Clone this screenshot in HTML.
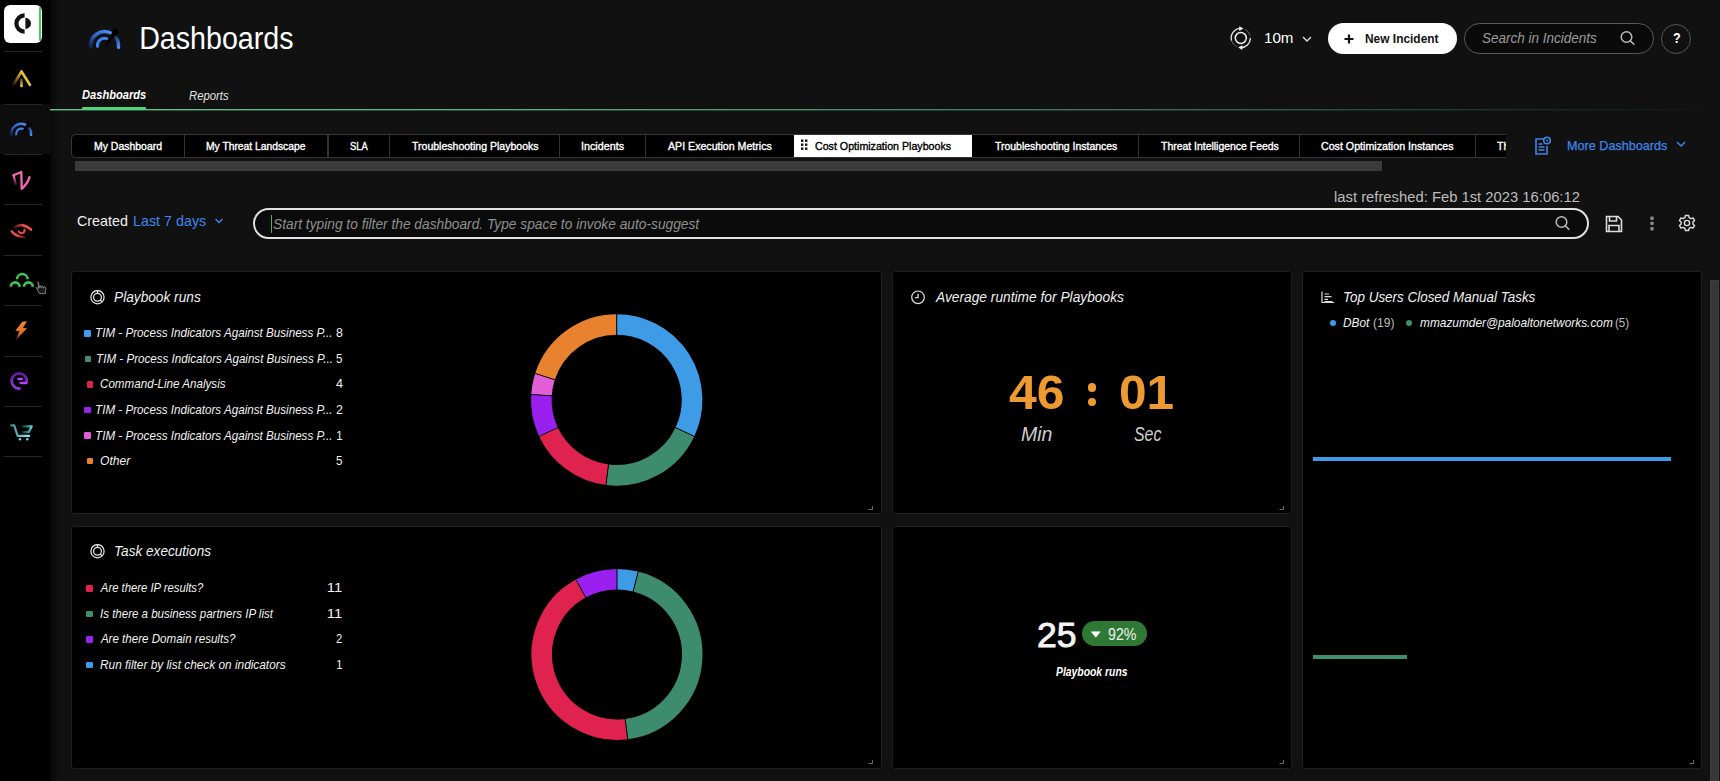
<!DOCTYPE html>
<html><head><meta charset="utf-8"><title>Dashboards</title>
<style>
html,body{margin:0;padding:0;}
body{width:1720px;height:781px;overflow:hidden;background:#111111;position:relative;font-family:"Liberation Sans", sans-serif;}
.b{position:absolute;box-sizing:border-box;}
.t{position:absolute;white-space:nowrap;line-height:1.117;transform-origin:0 0;}

#h_title{transform:translate(-1.83px,1.32px) scaleX(0.9159)}
#h_10m{transform:translate(-1.02px,0.41px) scaleX(1.0234)}
#h_new{transform:translate(0.00px,0.88px) scaleX(0.9083)}
#h_search{transform:translate(0.00px,0.41px) scaleX(0.9126)}
#h_q{transform:translate(0.00px,0.41px) scaleX(0.8556)}
#st_dash{transform:translate(0.00px,0.75px) scaleX(0.8554)}
#st_rep{transform:translate(0.00px,0.75px) scaleX(0.8723)}
#tab0{transform:translate(0.00px,0.62px) scaleX(0.9856)}
#tab1{transform:translate(0.00px,0.62px) scaleX(0.9707)}
#tab2{transform:translate(0.00px,0.62px) scaleX(0.8819)}
#tab3{transform:translate(0.00px,0.62px) scaleX(0.9915)}
#tab4{transform:translate(0.00px,0.62px) scaleX(1.0128)}
#tab5{transform:translate(0.00px,0.62px) scaleX(1.0003)}
#tab6{transform:translate(0.00px,0.62px) scaleX(0.9859)}
#tab7{transform:translate(0.00px,0.62px) scaleX(0.9840)}
#tab8{transform:translate(0.00px,0.62px) scaleX(1.0040)}
#tab_act{transform:translate(0.00px,0.62px) scaleX(1.0036)}
#tab_th{transform:translate(0.00px,0.62px) scaleX(1.0000)}
#md{transform:translate(-0.93px,0.27px) scaleX(0.9308)}
#lastref{transform:translate(-0.96px,-0.10px) scaleX(0.9631)}
#created{transform:translate(0.00px,0.41px) scaleX(0.9654)}
#last7{transform:translate(-0.97px,0.41px) scaleX(0.9667)}
#ph{transform:translate(0.00px,0.41px) scaleX(0.9291)}
#p1t{transform:translate(0.00px,0.16px) scaleX(0.9430)}
#p1r0{transform:translate(-0.89px,0.89px) scaleX(0.8865)}
#p1n0{transform:translate(0.00px,0.89px) scaleX(0.9429)}
#p1r1{transform:translate(-0.88px,0.89px) scaleX(0.8843)}
#p1n1{transform:translate(0.00px,0.89px) scaleX(0.8857)}
#p1r2{transform:translate(0.00px,0.89px) scaleX(0.8859)}
#p1n2{transform:translate(0.00px,0.89px) scaleX(0.9571)}
#p1r3{transform:translate(-0.89px,0.88px) scaleX(0.8865)}
#p1n3{transform:translate(0.00px,0.88px) scaleX(0.9429)}
#p1r4{transform:translate(-0.89px,0.88px) scaleX(0.8865)}
#p1n4{transform:translate(-0.87px,0.88px) scaleX(0.8667)}
#p1r5{transform:translate(0.00px,0.89px) scaleX(0.9207)}
#p1n5{transform:translate(0.00px,0.89px) scaleX(0.8857)}
#p2t{transform:translate(0.95px,0.16px) scaleX(0.9484)}
#min{transform:translate(0.00px,0.73px) scaleX(1.0327)}
#sec{transform:translate(-1.03px,0.73px) scaleX(1.0276)}
#minl{transform:translate(0.00px,0.71px) scaleX(0.9997)}
#secl{transform:translate(0.00px,0.71px) scaleX(0.8144)}
#p3t{transform:translate(-0.92px,0.16px) scaleX(0.9248)}
#dbot{transform:translate(0.00px,0.38px) scaleX(0.9389)}
#dbotn{transform:translate(0.00px,0.38px) scaleX(0.9613)}
#mm{transform:translate(0.00px,0.38px) scaleX(0.9450)}
#mmn{transform:translate(0.00px,0.38px) scaleX(0.9229)}
#p4t{transform:translate(-0.94px,0.15px) scaleX(0.9365)}
#p4r0{transform:translate(0.86px,0.88px) scaleX(0.8596)}
#p4n0{transform:translate(-1.14px,0.88px) scaleX(1.1359)}
#p4r1{transform:translate(0.00px,0.88px) scaleX(0.8767)}
#p4n1{transform:translate(-1.14px,0.88px) scaleX(1.1359)}
#p4r2{transform:translate(0.88px,0.88px) scaleX(0.8822)}
#p4n2{transform:translate(0.00px,0.88px) scaleX(0.8571)}
#p4r3{transform:translate(0.00px,0.88px) scaleX(0.9023)}
#p4n3{transform:translate(-0.85px,0.88px) scaleX(0.8500)}
#n25{transform:translate(-1.02px,-0.39px) scaleX(1.0189)}
#pct{transform:translate(0.00px,0.28px) scaleX(0.9006)}
#pbr{transform:translate(0.00px,0.39px) scaleX(0.8259)}
</style></head>
<body>
<div class="b" style="left:0px;top:0px;width:50px;height:781px;background:#000"></div>
<div class="b" style="left:50px;top:0px;width:9px;height:781px;background:linear-gradient(90deg,#080808,#111111)"></div>
<div class="b" style="left:0px;top:104px;width:50px;height:50px;background:#0d0d0d"></div>
<div class="b" style="left:4px;top:51px;width:38px;height:1px;background:#262626"></div>
<div class="b" style="left:4px;top:104px;width:38px;height:1px;background:#262626"></div>
<div class="b" style="left:4px;top:154px;width:38px;height:1px;background:#262626"></div>
<div class="b" style="left:4px;top:204px;width:38px;height:1px;background:#262626"></div>
<div class="b" style="left:4px;top:255px;width:38px;height:1px;background:#262626"></div>
<div class="b" style="left:4px;top:305px;width:38px;height:1px;background:#262626"></div>
<div class="b" style="left:4px;top:356px;width:38px;height:1px;background:#262626"></div>
<div class="b" style="left:4px;top:406px;width:38px;height:1px;background:#262626"></div>
<div class="b" style="left:4px;top:456px;width:38px;height:1px;background:#262626"></div>
<div class="b" style="left:4px;top:5px;width:38px;height:38px;background:#fff;border-radius:6px"></div>
<div class="b" style="left:38.6px;top:6.5px;width:2.5px;height:34.2px;background:#3ccf5a;border-radius:1px"></div>
<svg class="b" style="left:4px;top:5px;" width="38" height="38" viewBox="0 0 38 38">
<path d="M20.6 8.2 A10.3 10.3 0 0 0 20.6 28.8 L20.6 24.6 A6 6 0 0 1 20.6 12.4 Z" fill="#111"/>
<path d="M21.4 12.8 A5.6 5.6 0 0 1 21.4 24.0 Z" fill="#111"/>
</svg>
<svg class="b" style="left:0px;top:60px;" width="50" height="40" viewBox="0 0 50 40">
<defs><linearGradient id="gy" gradientUnits="userSpaceOnUse" x1="12" y1="26" x2="22" y2="11"><stop offset="0" stop-color="#000"/><stop offset="0.6" stop-color="#a88520"/><stop offset="1" stop-color="#e8c23a"/></linearGradient>
<linearGradient id="gy2" gradientUnits="userSpaceOnUse" x1="0" y1="19" x2="0" y2="27"><stop offset="0" stop-color="#5a4510"/><stop offset="1" stop-color="#ffd840"/></linearGradient></defs>
<path d="M12.7 26 L21.5 11.5" stroke="url(#gy)" stroke-width="2.6" fill="none" stroke-linecap="round"/>
<path d="M21.5 11.5 L30 25" stroke="#e6bf38" stroke-width="2.6" fill="none" stroke-linecap="round"/>
<path d="M21.5 19.5 L21.5 26" stroke="url(#gy2)" stroke-width="2.6" stroke-linecap="round"/>
</svg>
<svg class="b" style="left:0px;top:104px;" width="50" height="50" viewBox="0 0 50 50"><defs><linearGradient id="gsa" x1="0" x2="1" y1="1" y2="0"><stop offset="0" stop-color="#10244f"/><stop offset="0.45" stop-color="#2f63c2"/><stop offset="1" stop-color="#4a8ff7"/></linearGradient><linearGradient id="gsb" x1="0" x2="0" y1="0" y2="1"><stop offset="0" stop-color="#17346e"/><stop offset="1" stop-color="#4a8ff7"/></linearGradient></defs><path d="M11.35 30.74 A9.90 9.90 0 0 1 25.23 20.65" stroke="url(#gsa)" stroke-width="2.48" fill="none" stroke-linecap="round"/><path d="M27.57 22.11 A9.90 9.90 0 0 1 31.03 30.91" stroke="url(#gsb)" stroke-width="2.48" fill="none" stroke-linecap="round"/><path d="M16.13 30.32 A5.11 5.11 0 0 1 22.78 24.84" stroke="#3d7ff0" stroke-width="2.13" fill="none" stroke-linecap="round"/><path d="M21.55 30.05 L26.03 21.54 L28.51 16.71 L31.99 20.47 L27.45 24.38 L22.27 30.41 Z" fill="#000"/></svg>
<svg class="b" style="left:0px;top:160px;" width="50" height="40" viewBox="0 0 50 40">
<defs><linearGradient id="gpk" gradientUnits="userSpaceOnUse" x1="0" y1="16" x2="0" y2="25"><stop offset="0" stop-color="#f46aae"/><stop offset="1" stop-color="#3a0f25"/></linearGradient></defs>
<path d="M15.6 24 L13.6 15.2" stroke="url(#gpk)" stroke-width="2.3" fill="none" stroke-linecap="round"/>
<path d="M13.6 15.2 L21.3 12 L21.7 28.8 Q27.2 24.5 29.5 17.2" stroke="#f46aae" stroke-width="2.3" fill="none" stroke-linecap="round" stroke-linejoin="round"/>
</svg>
<svg class="b" style="left:0px;top:210px;" width="50" height="40" viewBox="0 0 50 40">
<defs><linearGradient id="ge1" gradientUnits="userSpaceOnUse" x1="14" y1="0" x2="24" y2="0"><stop offset="0" stop-color="#3a0d0c"/><stop offset="1" stop-color="#f0504a"/></linearGradient>
<linearGradient id="ge2" gradientUnits="userSpaceOnUse" x1="17" y1="0" x2="26" y2="0"><stop offset="0" stop-color="#f0504a"/><stop offset="1" stop-color="#2a0808"/></linearGradient></defs>
<path d="M14.7 17.5 Q21.5 11.8 31 19.6" stroke="url(#ge1)" stroke-width="2.6" fill="none" stroke-linecap="round"/>
<path d="M11.8 21.5 Q16.5 26.8 24.5 27.2" stroke="url(#ge2)" stroke-width="2.6" fill="none" stroke-linecap="round"/>
<path d="M18.7 21.3 A3.1 3.1 0 0 0 24.6 19.6" stroke="#ec4a45" stroke-width="2" fill="none" stroke-linecap="round"/>
</svg>
<svg class="b" style="left:0px;top:260px;" width="50" height="40" viewBox="0 0 50 40">
<path d="M17 19.3 A5.3 5.3 0 0 1 27.6 19.3" stroke="#41c45e" stroke-width="2.6" fill="none"/>
<path d="M10.8 26.8 A4.4 4.4 0 0 1 19.6 26.8" stroke="#41c45e" stroke-width="2.6" fill="none"/>
<path d="M24 26.8 A4.4 4.4 0 0 1 32.8 26.8" stroke="#41c45e" stroke-width="2.6" fill="none"/>
<path d="M38 21.8 L38.6 28.3 L36.2 27.5 L39.4 33.6 L45.2 33.6 L46 27.8 L44.6 26.6 L43.6 28.2 L42.6 25.8 L41.4 27.8 L40.6 25.6 L39.8 27.6 Z" stroke="#8a8a8a" stroke-width="0.9" fill="#1a1a1a"/>
</svg>
<svg class="b" style="left:0px;top:310px;" width="50" height="40" viewBox="0 0 50 40">
<defs><linearGradient id="gbo" gradientUnits="userSpaceOnUse" x1="0" y1="11" x2="0" y2="31"><stop offset="0" stop-color="#f08a3a"/><stop offset="0.6" stop-color="#e4701f"/><stop offset="1" stop-color="#3a1a05"/></linearGradient></defs>
<path d="M27 11.3 L22.4 11.8 L15.3 20.8 L19.4 21 L15.8 30.3 L27 18.2 L22.9 18 Z" fill="url(#gbo)"/>
</svg>
<svg class="b" style="left:0px;top:360px;" width="50" height="40" viewBox="0 0 50 40">
<defs><linearGradient id="gpe" gradientUnits="userSpaceOnUse" x1="0" y1="12" x2="0" y2="29"><stop offset="0" stop-color="#5a1a9a"/><stop offset="1" stop-color="#9a35ee"/></linearGradient></defs>
<path d="M26.8 21.3 A7.6 7.6 0 1 0 19.5 28.6" stroke="url(#gpe)" stroke-width="2.8" fill="none" stroke-linecap="round"/>
<path d="M18.4 19 L21.8 19" stroke="#c040ff" stroke-width="2.3" stroke-linecap="round"/>
<path d="M20.6 23 L26.5 23" stroke="#c040ff" stroke-width="2.3" stroke-linecap="round"/>
</svg>
<svg class="b" style="left:0px;top:412px;" width="50" height="40" viewBox="0 0 50 40">
<defs><linearGradient id="gc1" gradientUnits="userSpaceOnUse" x1="10" y1="0" x2="30" y2="0"><stop offset="0" stop-color="#2a8a8a"/><stop offset="1" stop-color="#9ff0f0"/></linearGradient>
<linearGradient id="gc2" gradientUnits="userSpaceOnUse" x1="22" y1="0" x2="32" y2="0"><stop offset="0" stop-color="#0a2a2a"/><stop offset="1" stop-color="#5ad8d8"/></linearGradient></defs>
<path d="M11.2 13.3 L14.2 13.3 L17.6 23.8 L29.1 23.8" stroke="url(#gc1)" stroke-width="2.2" fill="none" stroke-linecap="round" stroke-linejoin="round"/>
<path d="M22.4 14.4 L31.7 14.4 L28.6 20.2 L22.9 20.2" stroke="url(#gc2)" stroke-width="2.2" fill="none" stroke-linecap="round" stroke-linejoin="round"/>
<circle cx="19.9" cy="27.2" r="1.2" fill="#6adcdc"/><circle cx="27.3" cy="27.2" r="1.2" fill="#6adcdc"/>
</svg>
<svg class="b" style="left:84px;top:20px;" width="40" height="35" viewBox="0 0 40 35"><defs><linearGradient id="gha" x1="0" x2="1" y1="1" y2="0"><stop offset="0" stop-color="#10244f"/><stop offset="0.45" stop-color="#2f63c2"/><stop offset="1" stop-color="#4a8ff7"/></linearGradient><linearGradient id="ghb" x1="0" x2="0" y1="0" y2="1"><stop offset="0" stop-color="#17346e"/><stop offset="1" stop-color="#4a8ff7"/></linearGradient></defs><path d="M6.73 26.96 A13.95 13.95 0 0 1 26.27 12.76" stroke="url(#gha)" stroke-width="3.50" fill="none" stroke-linecap="round"/><path d="M29.57 14.81 A13.95 13.95 0 0 1 34.45 27.20" stroke="url(#ghb)" stroke-width="3.50" fill="none" stroke-linecap="round"/><path d="M13.45 26.38 A7.20 7.20 0 0 1 22.82 18.65" stroke="#3d7ff0" stroke-width="3.00" fill="none" stroke-linecap="round"/><path d="M21.10 26.00 L27.40 14.00 L30.90 7.20 L35.80 12.50 L29.40 18.00 L22.10 26.50 Z" fill="#000"/></svg>
<div class="t" id="h_title" style="left:141.00px;top:21.49px;font-size:31.28px;color:#fff;font-weight:400;">Dashboards</div>
<svg class="b" style="left:1226px;top:22px;" width="30" height="32" viewBox="0 0 30 32">
<circle cx="14.8" cy="16" r="5.5" stroke="#eee" stroke-width="1.5" fill="none"/>
<path d="M5.5 18.4 A9.6 9.6 0 0 1 14.8 6.4" stroke="#e8e8e8" stroke-width="1.3" fill="none" stroke-linecap="round"/>
<path d="M24.4 16.4 A9.6 9.6 0 0 1 14.8 25.6" stroke="#e8e8e8" stroke-width="1.3" fill="none" stroke-linecap="round"/>
<path d="M18.9 7.3 A9.6 9.6 0 0 1 24.2 13.5" stroke="#666" stroke-width="1" fill="none"/>
<path d="M10.7 24.7 A9.6 9.6 0 0 1 5.4 18.5" stroke="#666" stroke-width="1" fill="none"/>
<path d="M13.2 4.2 L17.4 6.6 L13.2 9 Z" fill="#f0f0f0"/>
<path d="M16.4 23.2 L12.2 25.6 L16.4 28 Z" fill="#f0f0f0"/>
</svg>
<div class="t" id="h_10m" style="left:1265.30px;top:30.40px;font-size:14.80px;color:#fff;font-weight:400;">10m</div>
<svg class="b" style="left:1300px;top:34px;" width="14" height="10" viewBox="0 0 14 10"><path d="M3 3 L7 7 L11 3" stroke="#ddd" stroke-width="1.4" fill="none"/></svg>
<div class="b" style="left:1327.5px;top:23px;width:129px;height:30.5px;background:#fff;border-radius:16px"></div>
<svg class="b" style="left:1343px;top:33px;" width="12" height="12" viewBox="0 0 12 12"><path d="M6 1.5 V10.5 M1.5 6 H10.5" stroke="#111" stroke-width="2.2"/></svg>
<div class="t" id="h_new" style="left:1364.60px;top:31.02px;font-size:13.13px;color:#111;font-weight:700;">New Incident</div>
<div class="b" style="left:1464px;top:23px;width:189.5px;height:31px;background:#0a0a0a;border:1px solid #5a5a5a;border-radius:16px"></div>
<div class="t" id="h_search" style="left:1482.00px;top:30.40px;font-size:14.80px;color:#9a9a9a;font-weight:400;font-style:italic;">Search in Incidents</div>
<svg class="b" style="left:1618px;top:28px;" width="20" height="20" viewBox="0 0 20 20"><circle cx="8.5" cy="9" r="5.3" stroke="#bbb" stroke-width="1.5" fill="none"/><path d="M12.3 12.8 L15.8 16.3" stroke="#bbb" stroke-width="1.6" stroke-linecap="round"/></svg>
<div class="b" style="left:1661px;top:23.5px;width:30px;height:30px;border:1px solid #555;border-radius:50%"></div>
<div class="t" id="h_q" style="left:1672.50px;top:30.40px;font-size:14.80px;color:#fff;font-weight:700;">?</div>
<div class="t" id="st_dash" style="left:82.00px;top:87.05px;font-size:12.99px;color:#fff;font-weight:700;font-style:italic;">Dashboards</div>
<div class="t" id="st_rep" style="left:188.50px;top:87.75px;font-size:12.99px;color:#e6e6e6;font-weight:400;font-style:italic;">Reports</div>
<div class="b" style="left:50px;top:109px;width:1670px;height:1px;background:linear-gradient(90deg,#6cc08c 0%,#5aa880 30%,#3a7060 65%,#1c3028 88%,#111 100%)"></div>
<div class="b" style="left:50px;top:110px;width:1670px;height:1px;background:linear-gradient(90deg,#2c5a3e 0%,#264c3a 30%,#1c3a30 65%,#141c18 88%,#111 100%)"></div>
<div class="b" style="left:82px;top:107px;width:64px;height:3px;background:#55d27c;border-radius:1px"></div>
<div class="b" style="left:71px;top:134px;width:1440px;height:24px;background:#000;border:1px solid #363636;border-radius:5px 0 0 5px;border-right:none"></div>
<div class="b" style="left:793.7px;top:135px;width:178.4px;height:22px;background:#fff"></div>
<div class="b" style="left:183.6px;top:135px;width:1.2px;height:22px;background:#333"></div>
<div class="b" style="left:327.4px;top:135px;width:1.2px;height:22px;background:#333"></div>
<div class="b" style="left:389.3px;top:135px;width:1.2px;height:22px;background:#333"></div>
<div class="b" style="left:559.3px;top:135px;width:1.2px;height:22px;background:#333"></div>
<div class="b" style="left:645px;top:135px;width:1.2px;height:22px;background:#333"></div>
<div class="b" style="left:1138.2px;top:135px;width:1.2px;height:22px;background:#333"></div>
<div class="b" style="left:1299.2px;top:135px;width:1.2px;height:22px;background:#333"></div>
<div class="b" style="left:1475.1px;top:135px;width:1.2px;height:22px;background:#333"></div>
<div class="b" style="left:1506px;top:128px;width:30px;height:36px;background:#111111"></div>
<div class="t" id="tab0" style="left:93.80px;top:139.99px;font-size:10.61px;color:#fff;font-weight:400;-webkit-text-stroke:0.35px #fff;">My Dashboard</div>
<div class="t" id="tab1" style="left:205.90px;top:139.99px;font-size:10.61px;color:#fff;font-weight:400;-webkit-text-stroke:0.35px #fff;">My Threat Landscape</div>
<div class="t" id="tab2" style="left:349.50px;top:139.99px;font-size:10.61px;color:#fff;font-weight:400;-webkit-text-stroke:0.35px #fff;">SLA</div>
<div class="t" id="tab3" style="left:411.60px;top:139.99px;font-size:10.61px;color:#fff;font-weight:400;-webkit-text-stroke:0.35px #fff;">Troubleshooting Playbooks</div>
<div class="t" id="tab4" style="left:581.00px;top:139.99px;font-size:10.61px;color:#fff;font-weight:400;-webkit-text-stroke:0.35px #fff;">Incidents</div>
<div class="t" id="tab5" style="left:667.70px;top:139.99px;font-size:10.61px;color:#fff;font-weight:400;-webkit-text-stroke:0.35px #fff;">API Execution Metrics</div>
<div class="t" id="tab6" style="left:995.00px;top:139.99px;font-size:10.61px;color:#fff;font-weight:400;-webkit-text-stroke:0.35px #fff;">Troubleshooting Instances</div>
<div class="t" id="tab7" style="left:1160.50px;top:139.99px;font-size:10.61px;color:#fff;font-weight:400;-webkit-text-stroke:0.35px #fff;">Threat Intelligence Feeds</div>
<div class="t" id="tab8" style="left:1321.00px;top:139.99px;font-size:10.61px;color:#fff;font-weight:400;-webkit-text-stroke:0.35px #fff;">Cost Optimization Instances</div>
<div class="t" id="tab_act" style="left:815.20px;top:139.99px;font-size:10.61px;color:#000;font-weight:400;-webkit-text-stroke:0.35px #000;">Cost Optimization Playbooks</div>
<svg class="b" style="left:799px;top:138px;" width="12" height="16" viewBox="0 0 12 16"><g fill="#111"><rect x="2" y="1.5" width="2.4" height="2.4"/><rect x="6" y="1.5" width="2.4" height="2.4"/><rect x="2" y="5.5" width="2.4" height="2.4"/><rect x="6" y="5.5" width="2.4" height="2.4"/><rect x="2" y="9.5" width="2.4" height="2.4"/><rect x="6" y="9.5" width="2.4" height="2.4"/></g></svg>
<div class="t" id="tab_th" style="left:1497.00px;top:139.99px;font-size:10.61px;color:#fff;font-weight:400;width:9px;overflow:hidden;-webkit-text-stroke:0.35px #fff;">Th</div>
<div class="b" style="left:75px;top:161px;width:1307px;height:9.5px;background:#3b3b3b"></div>
<svg class="b" style="left:1530px;top:134px;" width="24" height="24" viewBox="0 0 24 24"><g stroke="#3f86ea" stroke-width="1.6" fill="none">
<path d="M14 5 H6 V20 H17 V12"/><path d="M8.5 10 H12.5 M8.5 13 H14.5 M8.5 16 H14.5"/>
<circle cx="17" cy="6.5" r="3.3"/><path d="M17 5 V6.8 L18.2 7.6" stroke-width="1.1"/></g></svg>
<div class="t" id="md" style="left:1568.20px;top:138.04px;font-size:13.55px;color:#3f86ea;font-weight:400;-webkit-text-stroke:0.25px #3f86ea;">More Dashboards</div>
<svg class="b" style="left:1674px;top:139px;" width="14" height="10" viewBox="0 0 14 10"><path d="M3 3 L7 7 L11 3" stroke="#3f86ea" stroke-width="1.5" fill="none"/></svg>
<div class="t" id="lastref" style="left:1335.00px;top:187.80px;font-size:15.36px;color:#bdbdbd;font-weight:400;">last refreshed: Feb 1st 2023 16:06:12</div>
<div class="t" id="created" style="left:76.80px;top:213.10px;font-size:14.80px;color:#f0f0f0;font-weight:400;">Created</div>
<div class="t" id="last7" style="left:134.20px;top:213.10px;font-size:14.80px;color:#3f86ea;font-weight:400;">Last 7 days</div>
<svg class="b" style="left:212px;top:216px;" width="14" height="10" viewBox="0 0 14 10"><path d="M3.5 3 L7 6.5 L10.5 3" stroke="#3f86ea" stroke-width="1.5" fill="none"/></svg>
<div class="b" style="left:252.9px;top:208.3px;width:1336px;height:31px;background:#0b0b0b;border:2px solid #e2e2e2;border-radius:16px"></div>
<div class="b" style="left:270.5px;top:215px;width:1.3px;height:17.5px;background:#4caf50"></div>
<div class="t" id="ph" style="left:272.50px;top:216.10px;font-size:14.80px;color:#8f8f8f;font-weight:400;font-style:italic;">Start typing to filter the dashboard. Type space to invoke auto-suggest</div>
<svg class="b" style="left:1553px;top:213px;" width="20" height="20" viewBox="0 0 20 20"><circle cx="8.5" cy="9" r="5.3" stroke="#bbb" stroke-width="1.5" fill="none"/><path d="M12.3 12.8 L15.8 16.3" stroke="#bbb" stroke-width="1.6" stroke-linecap="round"/></svg>
<svg class="b" style="left:1603px;top:213px;" width="22" height="22" viewBox="0 0 22 22"><g stroke="#ddd" stroke-width="1.6" fill="none"><path d="M3.5 3.5 H15 L18.5 7 V18.5 H3.5 Z"/><path d="M6.5 3.5 V8 H13.5 V3.5"/><path d="M6 18.5 V12.5 H16 V18.5"/></g></svg>
<svg class="b" style="left:1645px;top:213px;" width="14" height="22" viewBox="0 0 14 22"><g fill="#8c8c8c"><rect x="5.3" y="3.6" width="3.4" height="3.4" rx="1"/><rect x="5.3" y="8.7" width="3.4" height="3.4" rx="1"/><rect x="5.3" y="14" width="3.4" height="3.4" rx="1"/></g></svg>
<svg class="b" style="left:1676px;top:212px;" width="22" height="22" viewBox="0 0 22 22"><g transform="translate(11,11)"><path d="M-1.6 -7.5 H1.6 L2.1 -5.3 L3.9 -4.3 L6 -5.1 L7.6 -2.4 L5.9 -0.9 V0.9 L7.6 2.4 L6 5.1 L3.9 4.3 L2.1 5.3 L1.6 7.5 H-1.6 L-2.1 5.3 L-3.9 4.3 L-6 5.1 L-7.6 2.4 L-5.9 0.9 V-0.9 L-7.6 -2.4 L-6 -5.1 L-3.9 -4.3 L-2.1 -5.3 Z" stroke="#ddd" stroke-width="1.4" fill="none" stroke-linejoin="round"/><circle r="2.6" stroke="#ddd" stroke-width="1.4" fill="none"/></g></svg>
<div class="b" style="left:71.2px;top:271.4px;width:810.5px;height:243px;background:#000;border:1px solid #1f1f1f;border-radius:3px"></div>
<div class="b" style="left:892.4px;top:271.4px;width:399.6px;height:242.6px;background:#000;border:1px solid #1f1f1f;border-radius:3px"></div>
<div class="b" style="left:1302.4px;top:271.4px;width:399.2px;height:497.6px;background:#000;border:1px solid #1f1f1f;border-radius:3px"></div>
<div class="b" style="left:71.2px;top:525.6px;width:810.5px;height:243.4px;background:#000;border:1px solid #1f1f1f;border-radius:3px"></div>
<div class="b" style="left:892.4px;top:525.6px;width:399.6px;height:243.4px;background:#000;border:1px solid #1f1f1f;border-radius:3px"></div>
<svg class="b" style="left:868px;top:505px;" width="6" height="6" viewBox="0 0 6 6"><path d="M4.5 1 V4.5 H0.5" stroke="#6a6a6a" stroke-width="1" fill="none"/></svg>
<svg class="b" style="left:1279px;top:505px;" width="6" height="6" viewBox="0 0 6 6"><path d="M4.5 1 V4.5 H0.5" stroke="#6a6a6a" stroke-width="1" fill="none"/></svg>
<svg class="b" style="left:868px;top:759px;" width="6" height="6" viewBox="0 0 6 6"><path d="M4.5 1 V4.5 H0.5" stroke="#6a6a6a" stroke-width="1" fill="none"/></svg>
<svg class="b" style="left:1279px;top:759px;" width="6" height="6" viewBox="0 0 6 6"><path d="M4.5 1 V4.5 H0.5" stroke="#6a6a6a" stroke-width="1" fill="none"/></svg>
<svg class="b" style="left:1689px;top:759px;" width="6" height="6" viewBox="0 0 6 6"><path d="M4.5 1 V4.5 H0.5" stroke="#6a6a6a" stroke-width="1" fill="none"/></svg>
<div class="b" style="left:1710px;top:280px;width:9.2px;height:501px;background:#373737;border:1px solid #3d3d3d"></div>
<svg class="b" style="left:90px;top:290px;" width="16" height="16" viewBox="0 0 16 16"><g stroke="#e6e6e6" fill="none" stroke-width="1.25"><circle cx="7.5" cy="7.2" r="6.6"/><circle cx="7.5" cy="7.2" r="3.9"/><path d="M7.5 0.6 V3.3 M10.3 10 L12.2 11.9"/></g></svg>
<div class="t" id="p1t" style="left:114.30px;top:289.15px;font-size:14.53px;color:#f0f0f0;font-weight:400;font-style:italic;">Playbook runs</div>
<div class="b" style="left:84.3px;top:330.20000000000005px;width:6.4px;height:6.4px;background:#3d9be9;border-radius:1.2px"></div>
<div class="t" id="p1r0" style="left:96.00px;top:325.32px;font-size:13.13px;color:#f2f2f2;font-weight:400;font-style:italic;">TIM - Process Indicators Against Business P...</div>
<div class="t" id="p1n0" style="left:335.60px;top:325.32px;font-size:13.13px;color:#f2f2f2;font-weight:400;">8</div>
<div class="b" style="left:85px;top:355.75000000000006px;width:6.4px;height:6.4px;background:#3f8f6f;border-radius:1.2px"></div>
<div class="t" id="p1r1" style="left:96.60px;top:350.87px;font-size:13.13px;color:#f2f2f2;font-weight:400;font-style:italic;">TIM - Process Indicators Against Business P...</div>
<div class="t" id="p1n1" style="left:336.00px;top:350.87px;font-size:13.13px;color:#f2f2f2;font-weight:400;">5</div>
<div class="b" style="left:86.6px;top:381.30000000000007px;width:6.4px;height:6.4px;background:#e0234e;border-radius:1.2px"></div>
<div class="t" id="p1r2" style="left:100.00px;top:376.42px;font-size:13.13px;color:#f2f2f2;font-weight:400;font-style:italic;">Command-Line Analysis</div>
<div class="t" id="p1n2" style="left:335.50px;top:376.42px;font-size:13.13px;color:#f2f2f2;font-weight:400;">4</div>
<div class="b" style="left:84.3px;top:406.85px;width:6.4px;height:6.4px;background:#9a22f0;border-radius:1.2px"></div>
<div class="t" id="p1r3" style="left:96.00px;top:401.97px;font-size:13.13px;color:#f2f2f2;font-weight:400;font-style:italic;">TIM - Process Indicators Against Business P...</div>
<div class="t" id="p1n3" style="left:335.60px;top:401.97px;font-size:13.13px;color:#f2f2f2;font-weight:400;">2</div>
<div class="b" style="left:84.3px;top:432.40000000000003px;width:6.4px;height:6.4px;background:#e05bd9;border-radius:1.2px"></div>
<div class="t" id="p1r4" style="left:96.00px;top:427.52px;font-size:13.13px;color:#f2f2f2;font-weight:400;font-style:italic;">TIM - Process Indicators Against Business P...</div>
<div class="t" id="p1n4" style="left:337.00px;top:427.52px;font-size:13.13px;color:#f2f2f2;font-weight:400;">1</div>
<div class="b" style="left:86.6px;top:457.95000000000005px;width:6.4px;height:6.4px;background:#e8822e;border-radius:1.2px"></div>
<div class="t" id="p1r5" style="left:100.00px;top:453.07px;font-size:13.13px;color:#f2f2f2;font-weight:400;font-style:italic;">Other</div>
<div class="t" id="p1n5" style="left:336.00px;top:453.07px;font-size:13.13px;color:#f2f2f2;font-weight:400;">5</div>
<svg class="b" style="left:520px;top:300px;" width="200" height="200" viewBox="0 0 200 200"><path d="M96.70 24.50 A75.4 75.4 0 0 1 164.92 132.00" stroke="#3e9be6" stroke-width="20.60000000000001" fill="none"/><path d="M164.92 132.00 A75.4 75.4 0 0 1 87.25 174.71" stroke="#3e8c70" stroke-width="20.60000000000001" fill="none"/><path d="M87.25 174.71 A75.4 75.4 0 0 1 28.48 132.00" stroke="#e0234e" stroke-width="20.60000000000001" fill="none"/><path d="M28.48 132.00 A75.4 75.4 0 0 1 21.45 95.17" stroke="#9a20f0" stroke-width="20.60000000000001" fill="none"/><path d="M21.45 95.17 A75.4 75.4 0 0 1 24.99 76.60" stroke="#e35fd8" stroke-width="20.60000000000001" fill="none"/><path d="M24.99 76.60 A75.4 75.4 0 0 1 96.70 24.50" stroke="#e8822f" stroke-width="20.60000000000001" fill="none"/><path d="M96.70 35.80 L96.70 13.20" stroke="#000" stroke-width="1"/><path d="M154.70 127.19 L175.15 136.82" stroke="#000" stroke-width="1"/><path d="M88.67 163.49 L85.83 185.92" stroke="#000" stroke-width="1"/><path d="M38.70 127.19 L18.25 136.82" stroke="#000" stroke-width="1"/><path d="M32.73 95.88 L10.17 94.46" stroke="#000" stroke-width="1"/><path d="M35.74 80.09 L14.24 73.11" stroke="#000" stroke-width="1"/></svg>
<svg class="b" style="left:910px;top:290px;" width="16" height="16" viewBox="0 0 16 16"><circle cx="8" cy="7.3" r="6.3" stroke="#e0e0e0" stroke-width="1.2" fill="none"/><path d="M8 3.8 V7.6 H5.2" stroke="#e0e0e0" stroke-width="1.3" fill="none"/></svg>
<div class="t" id="p2t" style="left:934.90px;top:289.15px;font-size:14.53px;color:#f0f0f0;font-weight:400;font-style:italic;">Average runtime for Playbooks</div>
<div class="t" id="min" style="left:1009.10px;top:365.47px;font-size:48.32px;color:#ee9a30;font-weight:700;">46</div>
<div class="b" style="left:1087.5px;top:383px;width:8.5px;height:8.5px;background:#ee9a30;border-radius:50%"></div>
<div class="b" style="left:1087.5px;top:397.5px;width:8.5px;height:8.5px;background:#ee9a30;border-radius:50%"></div>
<div class="t" id="sec" style="left:1119.60px;top:365.47px;font-size:48.32px;color:#ee9a30;font-weight:700;">01</div>
<div class="t" id="minl" style="left:1021.40px;top:422.70px;font-size:19.55px;color:#cfcfcf;font-weight:400;font-style:italic;">Min</div>
<div class="t" id="secl" style="left:1133.60px;top:422.70px;font-size:19.55px;color:#cfcfcf;font-weight:400;font-style:italic;">Sec</div>
<svg class="b" style="left:1318px;top:288px;" width="18" height="18" viewBox="0 0 18 18"><g stroke="#ddd" stroke-width="1.2" fill="none"><path d="M4 3.5 V14.5 H16"/><path d="M6.5 6 H11 M6.5 8.7 H13.5 M6.5 11.4 H10 M6.5 13.5 H14.5"/></g></svg>
<div class="t" id="p3t" style="left:1344.20px;top:289.15px;font-size:14.53px;color:#f0f0f0;font-weight:400;font-style:italic;">Top Users Closed Manual Tasks</div>
<div class="b" style="left:1329.6px;top:319.6px;width:6px;height:6px;background:#3d9be9;border-radius:50%"></div>
<div class="t" id="dbot" style="left:1343.20px;top:315.52px;font-size:12.57px;color:#f2f2f2;font-weight:400;font-style:italic;">DBot</div>
<div class="t" id="dbotn" style="left:1372.50px;top:315.52px;font-size:12.57px;color:#bdbdbd;font-weight:400;">(19)</div>
<div class="b" style="left:1406.1px;top:319.6px;width:6px;height:6px;background:#3f8f6f;border-radius:50%"></div>
<div class="t" id="mm" style="left:1419.80px;top:315.52px;font-size:12.57px;color:#f2f2f2;font-weight:400;font-style:italic;">mmazumder@paloaltonetworks.com</div>
<div class="t" id="mmn" style="left:1614.50px;top:315.52px;font-size:12.57px;color:#bdbdbd;font-weight:400;">(5)</div>
<div class="b" style="left:1312.6px;top:457px;width:358.4px;height:4.4px;background:#3d9be9"></div>
<div class="b" style="left:1313px;top:654.7px;width:94px;height:4px;background:#3f8f6f"></div>
<svg class="b" style="left:90px;top:544.2px;" width="16" height="16" viewBox="0 0 16 16"><g stroke="#e6e6e6" fill="none" stroke-width="1.25"><circle cx="7.5" cy="7.2" r="6.6"/><circle cx="7.5" cy="7.2" r="3.9"/><path d="M7.5 0.6 V3.3 M10.3 10 L12.2 11.9"/></g></svg>
<div class="t" id="p4t" style="left:114.50px;top:543.25px;font-size:14.53px;color:#f0f0f0;font-weight:400;font-style:italic;">Task executions</div>
<div class="b" style="left:86.2px;top:585.1999999999999px;width:6.4px;height:6.4px;background:#e0234e;border-radius:1.2px"></div>
<div class="t" id="p4r0" style="left:100.00px;top:580.02px;font-size:13.13px;color:#f2f2f2;font-weight:400;font-style:italic;">Are there IP results?</div>
<div class="t" id="p4n0" style="left:328.30px;top:580.02px;font-size:13.13px;color:#f2f2f2;font-weight:400;">11</div>
<div class="b" style="left:86.2px;top:610.6999999999999px;width:6.4px;height:6.4px;background:#3f8f6f;border-radius:1.2px"></div>
<div class="t" id="p4r1" style="left:100.00px;top:605.52px;font-size:13.13px;color:#f2f2f2;font-weight:400;font-style:italic;">Is there a business partners IP list</div>
<div class="t" id="p4n1" style="left:328.30px;top:605.52px;font-size:13.13px;color:#f2f2f2;font-weight:400;">11</div>
<div class="b" style="left:86.2px;top:636.1999999999999px;width:6.4px;height:6.4px;background:#9a22f0;border-radius:1.2px"></div>
<div class="t" id="p4r2" style="left:100.00px;top:631.02px;font-size:13.13px;color:#f2f2f2;font-weight:400;font-style:italic;">Are there Domain results?</div>
<div class="t" id="p4n2" style="left:336.30px;top:631.02px;font-size:13.13px;color:#f2f2f2;font-weight:400;">2</div>
<div class="b" style="left:86.2px;top:661.6999999999999px;width:6.4px;height:6.4px;background:#3d9be9;border-radius:1.2px"></div>
<div class="t" id="p4r3" style="left:100.00px;top:656.52px;font-size:13.13px;color:#f2f2f2;font-weight:400;font-style:italic;">Run filter by list check on indicators</div>
<div class="t" id="p4n3" style="left:337.20px;top:656.52px;font-size:13.13px;color:#f2f2f2;font-weight:400;">1</div>
<svg class="b" style="left:520px;top:555px;" width="200" height="200" viewBox="0 0 200 200"><path d="M97.00 24.15 A75.25 75.25 0 0 1 115.71 26.51" stroke="#3e9be6" stroke-width="20.5" fill="none"/><path d="M115.71 26.51 A75.25 75.25 0 0 1 106.43 174.06" stroke="#3e8c70" stroke-width="20.5" fill="none"/><path d="M106.43 174.06 A75.25 75.25 0 0 1 60.75 33.46" stroke="#e0234e" stroke-width="20.5" fill="none"/><path d="M60.75 33.46 A75.25 75.25 0 0 1 97.00 24.15" stroke="#9a20f0" stroke-width="20.5" fill="none"/><path d="M97.00 35.40 L97.00 12.90" stroke="#000" stroke-width="1"/><path d="M112.92 37.41 L118.51 15.62" stroke="#000" stroke-width="1"/><path d="M105.02 162.90 L107.84 185.22" stroke="#000" stroke-width="1"/><path d="M66.17 43.32 L55.33 23.60" stroke="#000" stroke-width="1"/></svg>
<div class="t" id="n25" style="left:1037.70px;top:614.70px;font-size:34.92px;color:#f4f4f4;font-weight:400;-webkit-text-stroke:0.9px #f4f4f4;">25</div>
<div class="b" style="left:1081.5px;top:620.9px;width:65.1px;height:25.4px;background:#2e7a34;border-radius:13px"></div>
<svg class="b" style="left:1089px;top:630px;" width="14" height="10" viewBox="0 0 14 10"><path d="M2.3 1.8 L11.3 1.8 L6.8 7.2 Z" fill="#fff" stroke="#fff" stroke-width="0.6" stroke-linejoin="round"/></svg>
<div class="t" id="pct" style="left:1108.20px;top:625.72px;font-size:15.78px;color:#f0f0f0;font-weight:400;">92%</div>
<div class="t" id="pbr" style="left:1056.40px;top:664.62px;font-size:12.57px;color:#fff;font-weight:700;font-style:italic;">Playbook runs</div>
</body></html>
